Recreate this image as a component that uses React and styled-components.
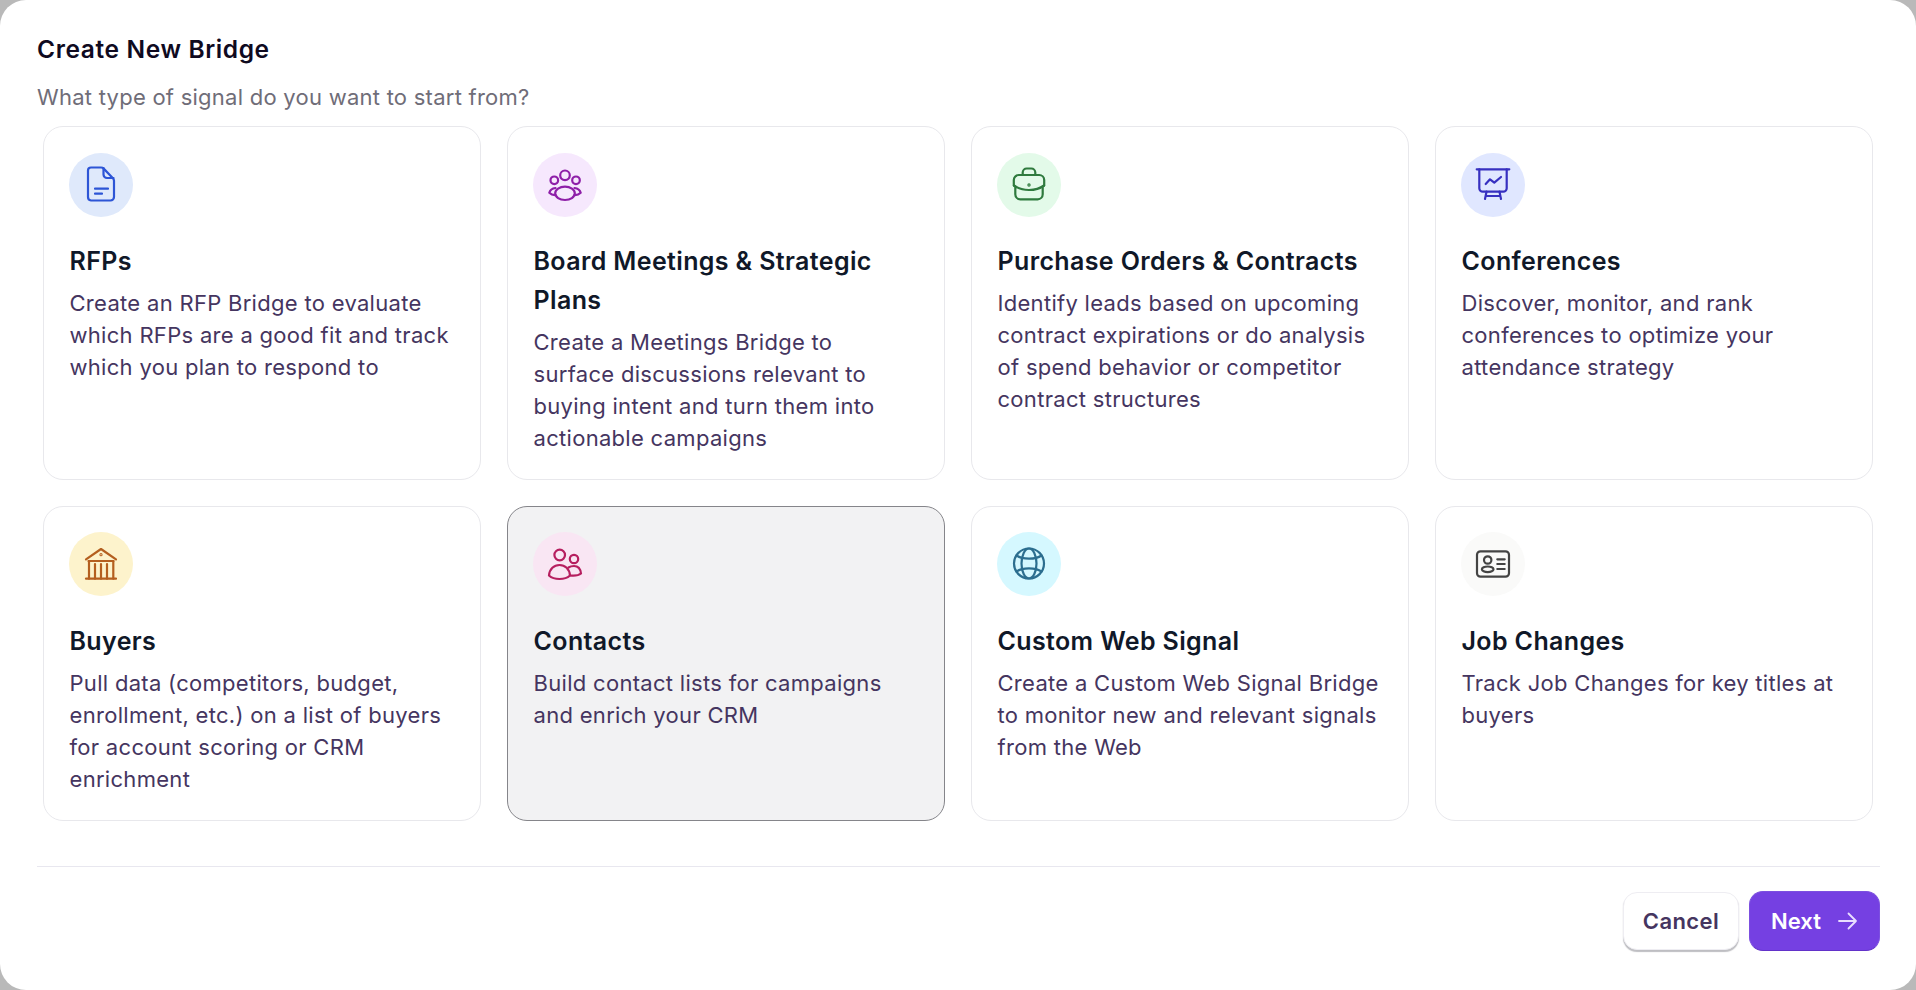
import React from 'react';
import styled, { createGlobalStyle } from 'styled-components';

const GlobalStyle = createGlobalStyle`
	html, body {
		margin: 0;
		padding: 0;
		height: 100%;
		background: #b9b9b9;
		font-family: Inter, "Liberation Sans", sans-serif;
	}
`;

const Dialog = styled.div`
	box-sizing: border-box;
	width: 1916px;
	height: 990px;
	background: #fff;
	border-radius: 26px;
	padding: 34px 36px 0 37px;
	display: flex;
	flex-direction: column;
	overflow: hidden;
`;

const Title = styled.h2`
	margin: 0;
	font-size: 24.5px;
	line-height: 30px;
	font-weight: 600;
	letter-spacing: 0.62px;
	color: #0f0a1f;
`;

const Subtitle = styled.p`
	margin: 18px 0 0;
	font-size: 22px;
	line-height: 30px;
	letter-spacing: 0.25px;
	color: #6f6d78;
`;

const CardGrid = styled.div`
	margin: 14px 7px 0 6px;
	display: grid;
	grid-template-columns: repeat(4, 438px);
	grid-template-rows: 354px 315px;
	gap: 26px;
`;

const IconCircle = styled.div`
	width: 64px;
	height: 64px;
	border-radius: 50%;
	background: ${(p) => p.$bg};
	color: ${(p) => p.$fg};
	display: flex;
	align-items: center;
	justify-content: center;
	margin-bottom: 25px;
`;

const Card = styled.div`
	box-sizing: border-box;
	padding: 26px 25px 0;
	border: 1px solid ${(p) => (p.$selected ? '#85858a' : '#e8e8ec')};
	border-radius: 20px;
	background: ${(p) => (p.$selected ? '#f2f2f3' : '#fff')};

	&:nth-child(n + 5) {
		padding-top: 25px;
	}

	&:nth-child(n + 5) ${IconCircle} {
		margin-bottom: 26px;
	}
`;

const CardTitle = styled.h3`
	margin: 0 0 0 0.5px;
	font-size: 25px;
	line-height: 39px;
	font-weight: 600;
	letter-spacing: 0.37px;
	color: #101828;
`;

const CardText = styled.p`
	margin: 6px 0 0 0.5px;
	font-size: 22px;
	line-height: 32px;
	letter-spacing: 0.3px;
	color: #453560;
`;

const Divider = styled.hr`
	margin: 45px 0 0;
	border: 0;
	height: 1px;
	background: #e8e7ef;
`;

const Footer = styled.div`
	margin-top: 24px;
	display: flex;
	justify-content: flex-end;
	align-items: center;
	gap: 10px;
`;

const CancelButton = styled.button`
	box-sizing: border-box;
	width: 116px;
	height: 58px;
	border: 1px solid #eeedf2;
	border-radius: 14px;
	background: #fff;
	box-shadow: 0 2px 1px rgba(70, 70, 80, 0.35);
	font: 600 22px Inter, sans-serif;
	letter-spacing: 0.4px;
	color: #453560;
`;

const NextButton = styled.button`
	box-sizing: border-box;
	width: 131px;
	height: 60px;
	border: 1px solid #7c4fe0;
	border-bottom-color: #6232c9;
	border-radius: 14px;
	background: #7540e2;
	display: flex;
	align-items: center;
	justify-content: center;
	gap: 17px;
	font: 600 22px Inter, sans-serif;
	color: #fff;
`;

const Svg = ({ children }) => (
	<svg width="40" height="40" viewBox="0 0 40 40" fill="none" stroke="currentColor" strokeWidth="2.2" strokeLinecap="round" strokeLinejoin="round">
		{children}
	</svg>
);

const DocIcon = () => (
	<Svg>
		<path d="M10 2.500h10c1 0 2 .4 2.700 1.100l9 9.300c.8.8 1.300 1.800 1.300 2.900V32a3.500 3.500 0 0 1-3.500 3.500h-19.500A3.500 3.500 0 0 1 7 32V5.500a3 3 0 0 1 3-3z" />
		<path d="M22.500 3v6.500a3.500 3.500 0 0 0 3.500 3.500h6.500" />
		<path d="M14 23.700h13M14 28.700h7" />
	</Svg>
);

const BoardIcon = () => (
	<Svg>
		<circle cx="20" cy="10.300" r="4.800" />
		<circle cx="9.300" cy="15.300" r="3.800" />
		<circle cx="31" cy="15.300" r="3.800" />
		<ellipse cx="20" cy="28.300" rx="9.800" ry="6.700" />
		<path d="M10.500 23C7.500 23.300 5 25.300 4.300 27.800c1.500 1.500 3.800 2.400 6.200 2.300" />
		<path d="M29.500 23c3 .3 5.500 2.300 6.200 4.800-1.500 1.500-3.800 2.400-6.200 2.300" />
	</Svg>
);

const BriefcaseIcon = () => (
	<Svg>
		<path d="M13.700 10V7.500a4 4 0 0 1 4-4h4.600a4 4 0 0 1 4 4V10" />
		<path d="M9.800 10h20.400a5 5 0 0 1 5 5v5.500l-1.500 1.300v7.500a5 5 0 0 1-5 5H11.300a5 5 0 0 1-5-5v-7.500l-1.500-1.300V15a5 5 0 0 1 5-5z" />
		<path d="M5 20.500C9 23.500 14.500 25 20 25s11-1.500 15-4.500" />
		<circle cx="20" cy="20" r=".6" />
	</Svg>
);

const PresentationIcon = () => (
	<Svg>
		<path d="M3.700 4.300h32.600" />
		<path d="M6.300 4.300v18.900a3.500 3.500 0 0 0 3.500 3.500h20.400a3.500 3.500 0 0 0 3.500-3.500V4.300" />
		<path d="M12.700 19l4.300-4.700 4.300 3.400L28 12" />
		<path d="M13.500 26.700L12 34M26.500 26.700L28 34M12.800 31h14.400" />
	</Svg>
);

const BankIcon = () => (
	<Svg>
		<path d="M5 15.300L20 5l15 10.300" />
		<path d="M7.500 17h25" />
		<path d="M8 17v17.700M14 20v14.700M20 20v14.700M26 20v14.700M32.300 17v17.700" />
		<path d="M5 34.700h30" />
		<circle cx="20" cy="10.700" r=".5" />
	</Svg>
);

const ContactsIcon = () => (
	<Svg>
		<circle cx="14.700" cy="11" r="5.300" />
		<circle cx="29" cy="15" r="4.200" />
		<path d="M14.500 21c-5.500 0-10 4-10.500 10.500 2.500 2.300 6.500 3.500 10.500 3.500s8-1.200 10.500-3.500C24.500 25 20 21 14.500 21z" />
		<path d="M23.500 23.500c1.500-1 3.500-1.500 5.500-1.500 4 0 6.500 3 7 7.500-1.700 1.500-6 2.500-11 2" />
	</Svg>
);

const GlobeIcon = () => (
	<Svg>
		<circle cx="20" cy="19.500" r="15" />
		<ellipse cx="20" cy="19.500" rx="7.500" ry="15" />
		<path d="M7.500 11.500c3 2.200 7.500 3.200 12.500 3.200s9.500-1 12.500-3.200" />
		<path d="M7.500 27.500c3-2.200 7.500-3.200 12.500-3.200s9.500 1 12.500 3.200" />
	</Svg>
);

const IdCardIcon = () => (
	<Svg>
		<rect x="4" y="7.300" width="32" height="25.400" rx="3.500" />
		<circle cx="14.700" cy="16" r="3.700" />
		<ellipse cx="14.700" cy="25.300" rx="5.800" ry="2.800" />
		<path d="M24.300 15.300h7.400M24.300 20h7.400M24.300 25h7.400" />
	</Svg>
);

const ArrowIcon = () => (
	<svg width="20" height="20" viewBox="0 0 20 20" fill="none" stroke="#e9dfff" strokeWidth="1.800" strokeLinecap="round" strokeLinejoin="round">
		<path d="M1 10h17M10.500 2.500L18 10l-7.500 7.500" />
	</svg>
);

const bridges = [
	{ title: 'RFPs', text: 'Create an RFP Bridge to evaluate which RFPs are a good fit and track which you plan to respond to', Icon: DocIcon, bg: '#dfe9fb', fg: '#2d55d6' },
	{ title: 'Board Meetings & Strategic Plans', text: 'Create a Meetings Bridge to surface discussions relevant to buying intent and turn them into actionable campaigns', Icon: BoardIcon, bg: '#f6e8fd', fg: '#8e1fa8' },
	{ title: 'Purchase Orders & Contracts', text: 'Identify leads based on upcoming contract expirations or do analysis of spend behavior or competitor contract structures', Icon: BriefcaseIcon, bg: '#e3fae9', fg: '#2f7a3e' },
	{ title: 'Conferences', text: 'Discover, monitor, and rank conferences to optimize your attendance strategy', Icon: PresentationIcon, bg: '#e0e7ff', fg: '#3730c0' },
	{ title: 'Buyers', text: 'Pull data (competitors, budget, enrollment, etc.) on a list of buyers for account scoring or CRM enrichment', Icon: BankIcon, bg: '#fdf3cc', fg: '#b45f1f' },
	{ title: 'Contacts', text: 'Build contact lists for campaigns and enrich your CRM', Icon: ContactsIcon, bg: '#f9e6f3', fg: '#b61f5f', selected: true },
	{ title: 'Custom Web Signal', text: 'Create a Custom Web Signal Bridge to monitor new and relevant signals from the Web', Icon: GlobeIcon, bg: '#d5f8ff', fg: '#2c6e8f' },
	{ title: 'Job Changes', text: 'Track Job Changes for key titles at buyers', Icon: IdCardIcon, bg: '#fafaf9', fg: '#444444' },
];

const App = () => (
	<>
		<GlobalStyle />
		<Dialog>
			<Title>Create New Bridge</Title>
			<Subtitle>What type of signal do you want to start from?</Subtitle>
			<CardGrid>
				{bridges.map(({ title, text, Icon, bg, fg, selected }) => (
					<Card key={title} $selected={selected}>
						<IconCircle $bg={bg} $fg={fg}>
							<Icon />
						</IconCircle>
						<CardTitle>{title}</CardTitle>
						<CardText>{text}</CardText>
					</Card>
				))}
			</CardGrid>
			<Divider />
			<Footer>
				<CancelButton>Cancel</CancelButton>
				<NextButton>
					Next
					<ArrowIcon />
				</NextButton>
			</Footer>
		</Dialog>
	</>
);

export default App;
